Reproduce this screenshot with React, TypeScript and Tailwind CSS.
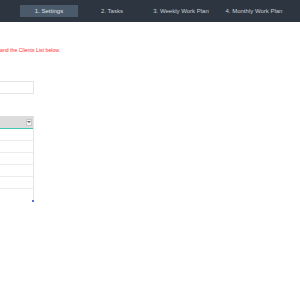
const tabs = [
  { label: '1. Settings', active: true, cls: 'ml-[20px]' },
  { label: '2. Tasks', active: false, cls: 'ml-[5px]' },
  { label: '3. Weekly Work Plan', active: false, cls: 'ml-[11px]' },
  { label: '4. Monthly Work Plan', active: false, cls: 'ml-[15px]' },
]

export default function App() {
  return (
    <div className="w-[300px] h-[300px] bg-white overflow-hidden font-['Liberation_Sans',sans-serif]">
      <div className="h-[22px] bg-[#2c3540] flex items-center">
        {tabs.map((t) => (
          <div
            key={t.label}
            className={`${t.cls} w-[58px] h-[12px] flex items-center justify-center text-[6px] whitespace-nowrap ${
              t.active ? 'bg-[#4b5a6a] text-[#dfe3e7]' : 'text-[#c9ced4]'
            }`}
          >
            {t.label}
          </div>
        ))}
      </div>

      <div className="mt-[25px] text-[5.2px] leading-[6px] text-[#ff3030] whitespace-nowrap">
        and the Clients List below.
      </div>

      <div className="mt-[28px] w-[34px] h-[13px] border border-l-0 border-[#e4e4e4]" />

      <div className="mt-[22px] w-[34px] border-r border-[#e4e4e4] relative">
        <div className="h-[12px] bg-[#dcdcdc] flex items-center justify-end pr-[1px]">
          <div className="w-[6px] h-[7px] bg-[#f4f4f4] border border-[#c8c8c8] flex items-center justify-center">
            <div className="w-0 h-0 border-l-[2px] border-r-[2px] border-t-[2px] border-l-transparent border-r-transparent border-t-[#666]" />
          </div>
        </div>
        <div className="h-[1px] bg-[#3fc8b4]" />
        {[0, 1, 2, 3, 4].map((i) => (
          <div key={i} className="h-[12px] border-b border-[#ececec]" />
        ))}
        <div className="h-[11px]" />
        <div className="absolute right-[-1px] bottom-[-2px] w-[2px] h-[2px] bg-[#5a6ee0]" />
      </div>
    </div>
  )
}
